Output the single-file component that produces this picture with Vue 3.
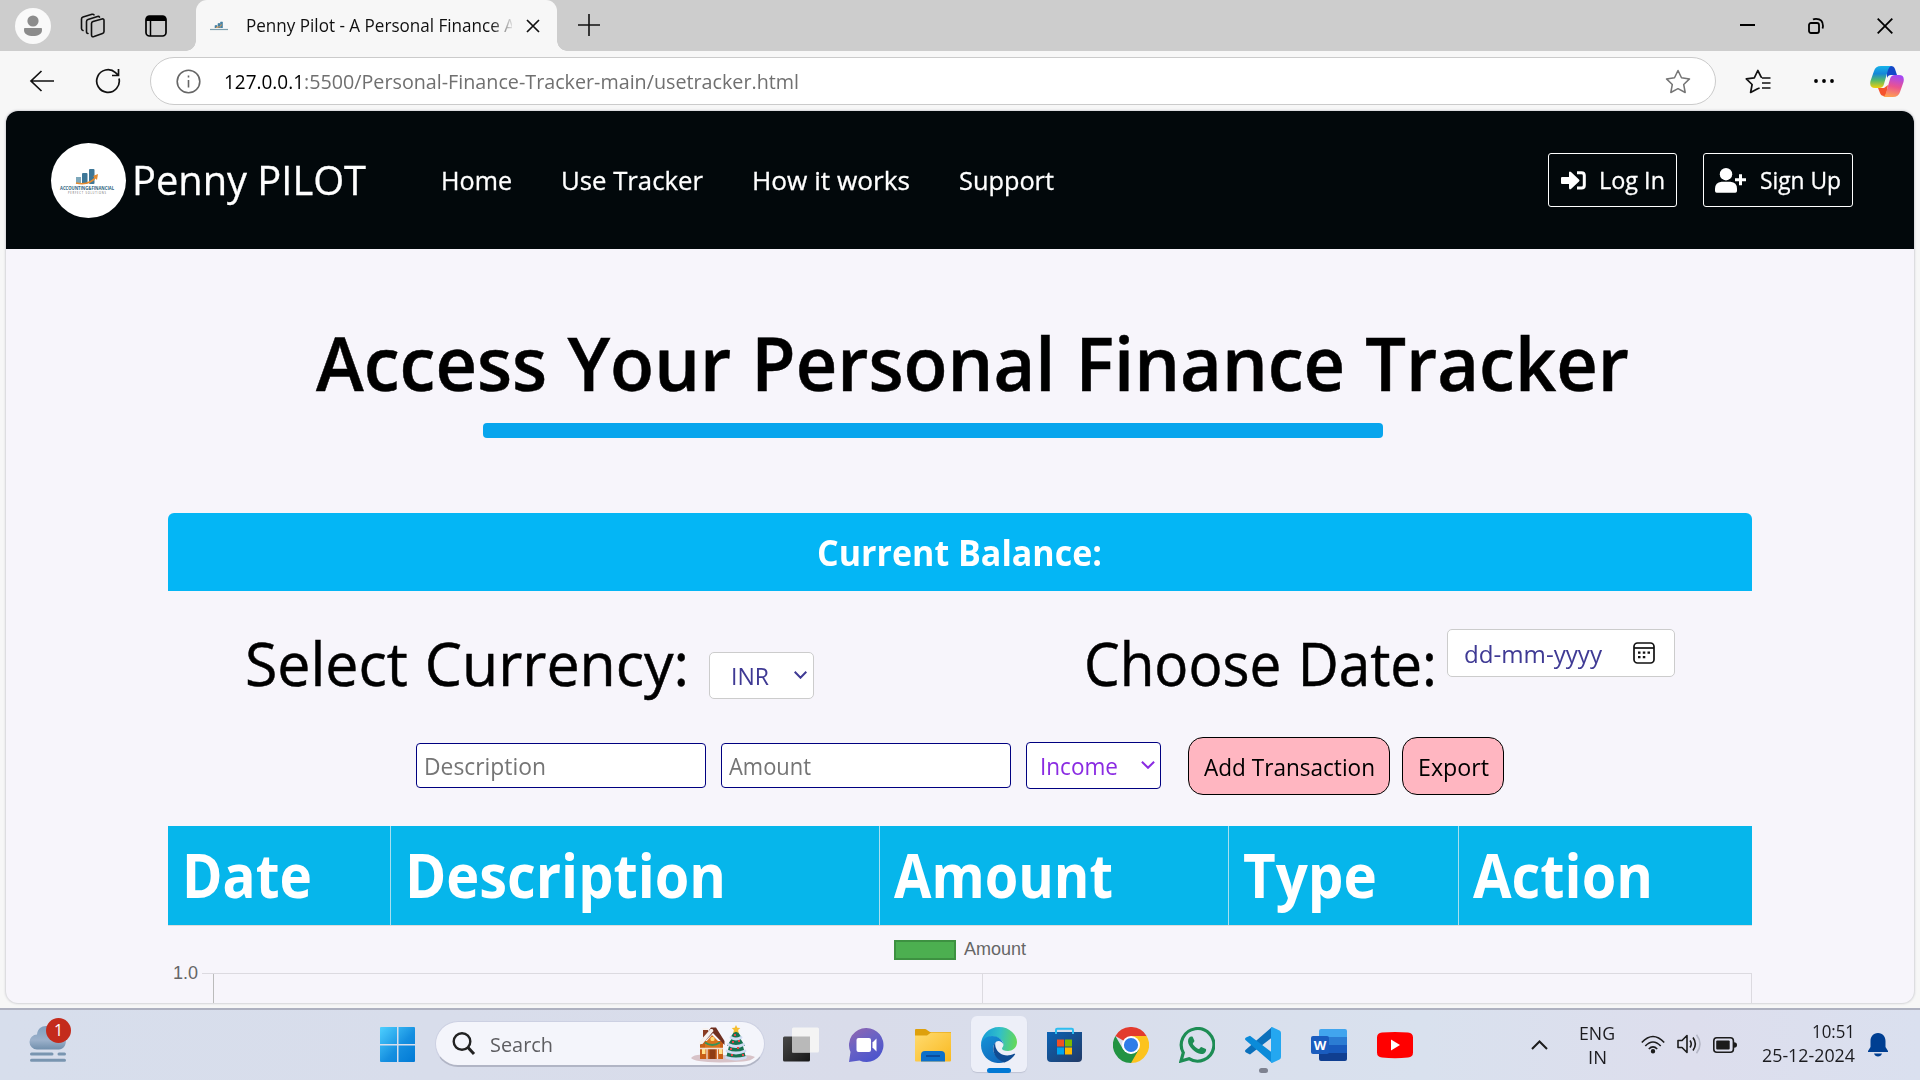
<script setup>
const vFit = {
  mounted(el, binding) {
    const natural = el.getBoundingClientRect().width
    el.style.transform = `scaleX(${binding.value / natural})`
    el.style.marginRight = binding.value - natural + 'px'
  },
}

const links = [
  { label: 'Home', width: 71 },
  { label: 'Use Tracker', width: 142 },
  { label: 'How it works', width: 158 },
  { label: 'Support', width: 95 },
]

const columns = [
  { label: 'Date', width: 130 },
  { label: 'Description', width: 321 },
  { label: 'Amount', width: 219 },
  { label: 'Type', width: 134 },
  { label: 'Action', width: 180 },
]
</script>

<template>
  <div class="desktop">
    <div class="tabbar">
      <svg class="avatar" width="36" height="36" viewBox="0 0 36 36">
        <circle cx="18" cy="18" r="18" fill="#f9f9f9" />
        <circle cx="18" cy="13" r="5.6" fill="#8c8c8c" />
        <path d="M9.5 20h17q.5 0 .5 2c0 4-4 6-9 6s-9-2-9-6q0-2 .5-2z" fill="#8c8c8c" />
      </svg>
      <svg class="collections" width="26" height="26" viewBox="0 0 26 26" fill="none" stroke="#111" stroke-width="1.6" stroke-linejoin="round" stroke-linecap="round">
        <path d="M11.5 10.5q0-1.500 1.500-2L22 6q2-.5 2 1.500v11q0 1.500-1.500 2L14 23.500q-2.500.8-2.500-1.500z" />
        <path d="M8 20.500q-1.500 0-1.500-2V8.500q0-1.500 1.500-2L17.500 3.500q1.500-.3 2 .6" />
        <path d="M3 17.500q-1.500-.3-1.500-2V6q0-1.500 1.500-2L12 1.300q1.500-.3 2 .6" />
      </svg>
      <svg class="tabmenu" width="22" height="22" viewBox="0 0 22 22">
        <rect x="1" y="1" width="20" height="20" rx="3.500" fill="none" stroke="#000" stroke-width="1.700" />
        <path d="M1 6V4q0-3 3-3h14q3 0 3 3v2z" fill="#000" />
        <path d="M5.500 6v15" stroke="#000" stroke-width="1.500" />
      </svg>
      <div class="tab">
        <svg width="18" height="10" viewBox="0 0 18 10">
          <path d="M5 7V4.500h2V7M8 7V2.500h2V7M10.500 7V1h2v6" fill="#4682a3" stroke="#4682a3" stroke-width=".6" />
          <path d="M6 6.500q4 0 6-3" stroke="#e69a4c" fill="none" />
          <path d="M0 8.500h18" stroke="#7d9fae" stroke-width="1.200" />
        </svg>
        <div class="tabtitle"><span v-fit="269">Penny Pilot - A Personal Finance A</span></div>
        <svg class="tabclose" width="14" height="14" viewBox="0 0 14 14" stroke="#111" stroke-width="1.700"><path d="M1 1l12 12M13 1L1 13" /></svg>
      </div>
      <svg class="plus" width="22" height="22" viewBox="0 0 22 22" stroke="#111" stroke-width="1.600"><path d="M11 0v22M0 11h22" /></svg>
      <div class="wincontrols">
        <svg width="15" height="15" viewBox="0 0 15 15" stroke="#000" stroke-width="2"><path d="M0 7h15" /></svg>
        <svg width="16" height="16" viewBox="0 0 16 16" fill="none" stroke="#000" stroke-width="1.800"><rect x="1" y="5" width="10" height="10" rx="2" /><path d="M5 1.500q1-.6 3-.6 7 0 7 7 0 1.500-.6 2.600" /></svg>
        <svg width="16" height="16" viewBox="0 0 16 16" stroke="#000" stroke-width="1.800"><path d="M.7.700l14.600 14.600M15.300.700L.7 15.300" /></svg>
      </div>
    </div>

    <div class="toolbar">
      <svg class="back" width="26" height="22" viewBox="0 0 26 22" fill="none" stroke="#111" stroke-width="1.700"><path d="M12.500 1L2 11l10.500 10M2 11h23" /></svg>
      <svg class="reload" width="26" height="26" viewBox="0 0 26 26" fill="none" stroke="#111" stroke-width="1.700"><path d="M24 10.500A11.300 11.300 0 1 1 20.500 4.600L23 7M23.500 1v6.500H17" /></svg>
      <div class="omnibox">
        <svg width="25" height="25" viewBox="0 0 25 25" fill="none" stroke="#666" stroke-width="1.600"><circle cx="12.500" cy="12.500" r="11.300" /><path d="M12.500 11v7.500M12.500 6.500v2" /></svg>
        <div class="url"><span v-fit="80" class="host">127.0.0.1</span><span v-fit="495">:5500/Personal-Finance-Tracker-main/usetracker.html</span></div>
        <svg class="star" width="26" height="25" viewBox="0 0 26 25" fill="none" stroke="#757575" stroke-width="1.500" stroke-linejoin="round"><path d="M13 1.500l3.500 7.300 8 1.100-5.800 5.600 1.500 8L13 19.700l-7.200 3.800 1.500-8L1.500 9.900l8-1.100z" /></svg>
      </div>
      <svg class="favs" width="26" height="25" viewBox="0 0 26 25" fill="none" stroke="#111" stroke-width="1.700" stroke-linejoin="round"><path d="M17 8.300l-.8-.1L12.800 1.500 9.300 8.800l-8 1.100 5.800 5.600-1.500 8 7-3.800 2-.7M17 9h8.500M17 14h8.500M17 19h8.500" /></svg>
      <svg class="dots" width="20" height="6" viewBox="0 0 20 6"><circle cx="2" cy="3" r="1.900" /><circle cx="10" cy="3" r="1.900" /><circle cx="18" cy="3" r="1.900" /></svg>
      <svg class="copilot" width="34" height="31" viewBox="0 0 34 31">
        <defs>
          <linearGradient id="cpA" x1="0" y1="0" x2="0" y2="1"><stop offset="0" stop-color="#17b4ea" /><stop offset=".35" stop-color="#1587d8" /><stop offset=".65" stop-color="#55b96b" /><stop offset="1" stop-color="#f4cf0a" /></linearGradient>
          <linearGradient id="cpB" x1=".5" y1="0" x2=".3" y2="1"><stop offset="0" stop-color="#a548f5" /><stop offset=".5" stop-color="#ea5390" /><stop offset="1" stop-color="#ffa24f" /></linearGradient>
        </defs>
        <path d="M17 0h4q3 0 4 3l2 6h-6q-3 0-4 3z" fill="#1448c8" />
        <path d="M8 22h6l4-3-2 11h-2q-3 0-4-3z" fill="#f5532d" />
        <path d="M11 0h10q-2 1-3 4l-4 14q-1 4-5 4H5q-6 0-4.500-7L4 5q1.500-5 7-5z" fill="url(#cpA)" />
        <path d="M23 31H13q2-1 3-4l4-14q1-4 5-4h4q6 0 4.500 7L30 26q-1.500 5-7 5z" fill="url(#cpB)" />
      </svg>
    </div>

    <main class="page">
      <header class="nav">
        <svg class="logo" width="75" height="75" viewBox="0 0 75 75">
          <circle cx="37.500" cy="37.500" r="37.500" fill="#fff" />
          <rect x="25" y="34" width="5" height="7" fill="#7ea8bb" />
          <rect x="31" y="30" width="5.500" height="11" rx="1" fill="#3e7797" />
          <rect x="38" y="26" width="5.500" height="15" rx="1" fill="#3e7797" />
          <path d="M25 40q13 3 20-6" fill="none" stroke="#e78b2f" stroke-width="1.600" />
          <path d="M47 31l-5 2 4 4z" fill="#e78b2f" />
          <text x="9" y="46.500" textLength="54" lengthAdjust="spacingAndGlyphs" font-size="4.600" font-weight="700" fill="#2d627e">ACCOUNTING&amp;FINANCIAL</text>
          <text x="17" y="50.500" textLength="38" font-size="2.600" fill="#666">PERFECT SOLUTIONS</text>
        </svg>
        <div class="brand"><span v-fit="234">Penny PILOT</span></div>
        <nav class="links"><a v-for="l in links" :key="l.label"><span v-fit="l.width">{{ l.label }}</span></a></nav>
        <div class="auth">
          <a class="login">
            <svg width="25" height="19" viewBox="0 0 25 19"><path d="M1 6h7V1.500Q8.500-.3 10 .9l8 7.500q.9 1 0 2l-8 7.600q-1.500 1.200-2-.7V13H1q-1 0-1-1V7q0-1 1-1z" fill="#fff" /><path d="M16 1.700h4.500q2.800 0 2.800 2.800v9.800q0 2.800-2.800 2.800H16" fill="none" stroke="#fff" stroke-width="3" /></svg>
            <span v-fit="66">Log In</span>
          </a>
          <a class="signup">
            <svg width="31" height="25" viewBox="0 0 31 25" fill="#fff"><circle cx="11" cy="6.200" r="6.200" /><path d="M6.500 13.800h9q6.500.5 6.500 7V23q0 1.700-1.700 1.700H1.700Q0 24.700 0 23v-2.200q.2-6.500 6.500-7zM24 6.200h3v4h4v3h-4v4h-3v-4h-4v-3h4z" /></svg>
            <span v-fit="81">Sign Up</span>
          </a>
        </div>
      </header>

      <h1><span v-fit="1313">Access Your Personal Finance Tracker</span></h1>
      <div class="rule"></div>

      <section class="tracker">
        <div class="balance"><span v-fit="285">Current Balance:</span></div>
        <div class="pickers">
          <label class="big currency"><span v-fit="444">Select Currency:</span></label>
          <div class="field inr"><span v-fit="38">INR</span><svg width="13" height="8" viewBox="0 0 13 8" fill="none" stroke="#3f3a94" stroke-width="2"><path d="M.7.700l5.800 6 5.800-6" /></svg></div>
          <label class="big date"><span v-fit="353">Choose Date:</span></label>
          <div class="field datebox">
            <span v-fit="138">dd-mm-yyyy</span>
            <svg width="22" height="22" viewBox="0 0 22 22"><rect x="1" y="1" width="20" height="20" rx="3.500" fill="none" stroke="#111" stroke-width="1.700" /><path d="M1 6h20" stroke="#111" stroke-width="1.700" /><path d="M5 10.700h2.500M9.800 10.700h2.500M14.500 10.700H17M5 15.200h2.500M9.800 15.200h2.500" stroke="#111" stroke-width="2.300" /></svg>
          </div>
        </div>
        <div class="form">
          <div class="input"><span v-fit="122">Description</span></div>
          <div class="input"><span v-fit="82">Amount</span></div>
          <div class="kind"><span v-fit="78">Income</span><svg width="14" height="8" viewBox="0 0 14 8" fill="none" stroke="#8a2be2" stroke-width="2"><path d="M.9.700L7 6.800 13.100.700" /></svg></div>
          <button class="add"><span v-fit="171">Add Transaction</span></button>
          <button class="export"><span v-fit="71">Export</span></button>
        </div>
        <div class="thead"><div v-for="c in columns" :key="c.label"><span v-fit="c.width">{{ c.label }}</span></div></div>
        <div class="chart">
          <div class="legend"><i></i><span>Amount</span></div>
          <div class="plot">
            <span class="tick">1.0</span>
            <div class="grid"><div class="stub"></div><div class="cell"></div><div class="cell"></div></div>
          </div>
        </div>
      </section>
    </main>

    <footer class="taskbar">
      <div class="weather">
        <svg width="44" height="48" viewBox="0 0 44 48">
          <defs><linearGradient id="cl" x1="0" y1="0" x2="0" y2="1"><stop offset="0" stop-color="#7f9fbe" /><stop offset=".6" stop-color="#9cb1cb" /><stop offset="1" stop-color="#718fac" /></linearGradient></defs>
          <path d="M9 29.500a7.500 7.500 0 0 1 0-15C10 3.500 24 3.500 27 12.500c6-2 11 3 11 7.500 0 6-3 9.500-7 9.500z" fill="url(#cl)" />
          <path d="M3.500 34h20.500M31 34h5.500M3.500 40.200h33" stroke="#7995b0" stroke-width="3" stroke-linecap="round" />
        </svg>
        <b>1</b>
      </div>
      <svg class="windows" width="36" height="36" viewBox="0 0 36 36">
        <defs><linearGradient id="wn" x1="0" y1="0" x2="36" y2="36" gradientUnits="userSpaceOnUse"><stop offset="0" stop-color="#4ed0ff" /><stop offset=".55" stop-color="#158fe0" /><stop offset="1" stop-color="#0078d4" /></linearGradient></defs>
        <path d="M1 0h16v17H0V1q0-1 1-1zM18.500 0H34q1 0 1 1v16H18.500zM0 18.500h17V35H1q-1 0-1-1zM18.500 18.500H35V34q0 1-1 1H18.500z" fill="url(#wn)" />
      </svg>
      <div class="search">
        <svg width="24" height="24" viewBox="0 0 24 24" fill="none" stroke="#222" stroke-width="2.400"><circle cx="10" cy="9.500" r="8.300" /><path d="M16 15.500l6 6.500" stroke-width="3" /></svg>
        <span v-fit="63">Search</span>
        <svg class="holiday" width="64" height="38" viewBox="0 0 64 38">
          <path d="M0 33q4-4 12-3h40q9 0 12 2-4 4-12 4.500-30 2-44-.5-6-1-8-3z" fill="#d8c3c8" />
          <path d="M12 4h5v9h-5z" fill="#8a3b22" /><path d="M9 16h23v18H9z" fill="#c95f16" />
          <path d="M20 2.500h5L33.500 16v4L22 8 9.500 20.500v-4z" fill="#6f2f20" /><path d="M19.500 4l2 0 1 2-11 13-3 .5v-3zM11.500 3h6v2h-6z" fill="#f7f1ef" />
          <path d="M21 10l8 8v6H14v-6z" fill="#d9731c" />
          <path d="M14 17.500q7 5 15 0" fill="none" stroke="#35945a" stroke-width="1.800" />
          <rect x="18.500" y="24" width="6" height="10" fill="#8f3d14" /><rect x="11" y="24" width="3.500" height="5" fill="#ffe08a" /><rect x="28" y="24" width="3.500" height="5" fill="#ffe08a" /><rect x="19.500" y="12" width="4" height="4" rx="1.500" fill="#ffd977" />
          <path d="M16 23v11M26.500 23v11M9 23.500h23" stroke="#f5ddd0" stroke-width="1.300" />
          <path d="M45 4l6 9h-2l5 8h-2l3 12H35l3-12h-2l5-8h-2z" fill="#17724f" />
          <path d="M40 12.500q5 3 10 0M37.500 19.500q7.500 4 15 0M36 26q9 4 18 0M35.500 32.500q9.500 3 19 0" fill="none" stroke="#cfdcf2" stroke-width="2.800" stroke-linecap="round" />
          <path d="M45 0l1.300 2.700 3 .4-2.200 2 .6 3L45 6.700l-2.700 1.400.6-3-2.200-2 3-.4z" fill="#f5bd2d" />
          <path d="M43 10h2M47 16h2M41 17h2M39 24h2M46 23h2M51 30h2M40 30h2" stroke="#e54545" stroke-width="2" />
        </svg>
      </div>
      <div class="apps">
        <svg width="36" height="36" viewBox="0 0 36 36">
          <defs><linearGradient id="tk" x1="0" y1="0" x2="1" y2="1"><stop offset="0" stop-color="#484848" /><stop offset="1" stop-color="#171717" /></linearGradient></defs>
          <rect x="0" y="9.500" width="27" height="25" rx="1.500" fill="url(#tk)" /><rect x="9" y=".5" width="27" height="25" rx="1.500" fill="#f4f4f4" /><path d="M9 9.500h18v16H9z" fill="#b9b9b9" />
        </svg>
        <svg width="36" height="36" viewBox="0 0 36 36">
          <defs><linearGradient id="ct" x1="0" y1="0" x2=".6" y2="1"><stop offset="0" stop-color="#9566ae" /><stop offset=".5" stop-color="#6a62c4" /><stop offset="1" stop-color="#4d55cc" /></linearGradient></defs>
          <path d="M17.500 1a17 17 0 1 1-7 32.500L0 35l1.500-10A17 17 0 0 1 17.500 1z" fill="url(#ct)" /><rect x="7.500" y="11" width="14.500" height="14" rx="2" fill="#fff" /><path d="M23.500 15.500l4-4v13l-4-4z" fill="#fff" />
        </svg>
        <svg width="36" height="36" viewBox="0 0 36 36">
          <defs><linearGradient id="fd" x1="0" y1="0" x2="1" y2="1"><stop offset="0" stop-color="#ffdb70" /><stop offset="1" stop-color="#f9b920" /></linearGradient></defs>
          <path d="M0 3q0-1 1-1h9q1 0 2 1l3 2H36v4H0z" fill="#dea00c" /><path d="M0 8.500h12l4-3h20v28q0 1-1 1H1q-1 0-1-1z" fill="url(#fd)" /><path d="M6 34.500V28q0-4 4-4h16q4 0 4 4v6.500z" fill="#0c70ca" /><path d="M11 29h14" stroke="#0a4c9c" stroke-width="2" />
        </svg>
        <div class="active">
          <svg width="36" height="36" viewBox="0 0 36 36">
            <defs>
              <linearGradient id="e1" x1="0" y1=".4" x2="1" y2=".5"><stop offset="0" stop-color="#149ad8" /><stop offset=".5" stop-color="#31bfc9" /><stop offset="1" stop-color="#64d957" /></linearGradient>
              <linearGradient id="e2" x1="0" y1="0" x2=".6" y2="1"><stop offset="0" stop-color="#1592d7" /><stop offset="1" stop-color="#126bbd" /></linearGradient>
            </defs>
            <path d="M0 18C0 8 8 0 18 0c11 0 18 8 18 15 0 6-5 9-9 9-4 0-6-1-6-2.500 0-1 1.500-1.500 1.500-4 0-4-5-8-11-8C6 9.500 2 14 0 18z" fill="url(#e1)" />
            <path d="M0 18c1-6 6-9 11-9 7 0 11.500 5 11.500 9-1-3-3-4-5-4-4 0-8 8-3 14 3 4 6 6 9 7-11 4-23.500-4-23.500-17z" fill="url(#e2)" />
            <path d="M14.500 15c-5.500 8 0 18 9 20.500 5-1.500 8.500-5 10.500-8 .5-1-.3-1-1-.7-5 2.500-11 2-14.500-1-3.500-3-5-7-4-10.800z" fill="#104c93" />
          </svg>
          <i></i>
        </div>
        <svg width="36" height="36" viewBox="0 0 36 36">
          <defs><linearGradient id="st" x1="0" y1="0" x2="1" y2="1"><stop offset="0" stop-color="#0b63b5" /><stop offset="1" stop-color="#223a66" /></linearGradient></defs>
          <path d="M0 5h35v26q0 4-4 4H4q-4 0-4-4z" fill="url(#st)" /><path d="M9 7V3q0-1.200 1.200-1.200h14.600Q26 1.800 26 3v4" fill="none" stroke="#2dbdf0" stroke-width="2" /><path d="M10 12.500h7v7h-7z" fill="#f25022" /><path d="M18 12.500h7v7h-7z" fill="#7fba00" /><path d="M10 20.500h7v7h-7z" fill="#00a4ef" /><path d="M18 20.500h7v7h-7z" fill="#ffb900" />
        </svg>
        <svg width="36" height="36" viewBox="0 0 36 36">
          <path d="M18 18L2.400 9A18 18 0 0 1 33.600 9z" fill="#e33b2e" /><path d="M18 18V9h15.600A18 18 0 0 1 18 36z" fill="#fcc31e" /><path d="M2.400 9L10.200 22.500 18 27l7.800-4.500L18 36A18 18 0 0 1 2.400 9z" fill="#229342" /><circle cx="18" cy="18" r="9" fill="#fff" /><circle cx="18" cy="18" r="7.100" fill="#2f7de9" />
        </svg>
        <svg width="36" height="36" viewBox="0 0 36 36">
          <path d="M2 34l2.300-8.300A16.300 16.300 0 1 1 10 31.700z" fill="none" stroke="#1d8d54" stroke-width="3.200" /><path d="M12.500 9.500c1 0 1.300.5 1.600 1.300l1.300 3c.3.800-1.600 2.200-1.600 3 0 .9 4.200 5.200 6 5.200.8 0 1.800-2.100 2.500-2l4 1.800c.8.400.9.700.8 1.600-.3 2.500-3 3.800-5 3.600C16 26.500 9 19 9 14.300c0-2.800 1.700-4.800 3.500-4.800z" fill="#1d8d54" />
        </svg>
        <div class="running">
          <svg width="36" height="36" viewBox="0 0 36 36">
            <path d="M27 0v10.500L5 27.500 1 25.500q-2-1.500 0-3z" fill="#0b70bb" /><path d="M27 36V25.500L5 8.700 1 10.500q-2 1.500 0 3z" fill="#0b8bd9" /><path d="M27 0l7.500 3.500Q36 4.300 36 6v24q0 1.700-1.500 2.500L27 36q-1-.2-1-1.500v-33Q26 .2 27 0z" fill="#24a7f0" />
          </svg>
          <i></i>
        </div>
        <svg width="36" height="36" viewBox="0 0 36 36">
          <path d="M8 10V4q0-2 2-2h24q2 0 2 2v6z" fill="#41a5ee" /><path d="M8 10h28v8H8z" fill="#2b7cd3" /><path d="M8 18h28v8H8z" fill="#185abd" /><path d="M8 26h28v6q0 2-2 2H10q-2 0-2-2z" fill="#103f91" /><rect y="9" width="18" height="18" rx="2" fill="#1a5cbe" /><text x="9" y="22.500" text-anchor="middle" font-size="13" font-weight="700" fill="#fff">W</text>
        </svg>
        <svg width="36" height="36" viewBox="0 0 36 36"><path d="M5 5.600q13-1.200 26 0 5 .4 5 5v15q0 4.500-5 5-13 1.200-26 0-5-.5-5-5v-15q0-4.600 5-5z" fill="#f00" /><path d="M14 12.500l9 5.500-9 5.500z" fill="#fff" /></svg>
      </div>
      <div class="tray">
        <svg class="up" width="17" height="10" viewBox="0 0 17 10" fill="none" stroke="#1c1c1c" stroke-width="2"><path d="M1 9l7.500-7.500L16 9" /></svg>
        <div class="lang"><span v-fit="36">ENG</span><span v-fit="19">IN</span></div>
        <svg class="wifi" width="24" height="19" viewBox="0 0 24 19" fill="none" stroke="#1c1c1c" stroke-width="1.600"><path d="M.8 7.500q11.200-12 22.400 0M4.300 11q7.700-8 15.400 0M7.800 14q4.200-4.200 8.400 0" /><circle cx="12" cy="16.300" r="1.400" fill="#1c1c1c" /></svg>
        <svg class="sound" width="25" height="20" viewBox="0 0 25 20" fill="none" stroke="#1c1c1c" stroke-width="1.600"><path d="M1 6.500h4l5-5v17l-5-5H1z" stroke-linejoin="round" /><path d="M13 6.500q2.500 3.500 0 7M16 3.500q4.700 6.500 0 13" /><path d="M19.500.800q7 9.200 0 18.400" stroke="#b4b7c6" /></svg>
        <svg class="battery" width="24" height="16" viewBox="0 0 24 16"><rect x=".8" y=".8" width="19.600" height="14.400" rx="3" fill="none" stroke="#1c1c1c" stroke-width="1.600" /><rect x="3.200" y="3.500" width="13.500" height="9" rx="1" fill="#1c1c1c" /><path d="M21 5.300q3 0 3 2.700t-3 2.700z" fill="#1c1c1c" /></svg>
        <div class="clock"><span v-fit="43">10:51</span><span v-fit="93">25-12-2024</span></div>
        <svg class="bell" width="20" height="24" viewBox="0 0 20 24" fill="#003f92"><path d="M10 0c5 0 7.500 4 7.500 8v6l2.500 4v1H0v-1l2.500-4V8c0-4 2.500-8 7.500-8zM6 20.500h8q-1 3-4 3t-4-3z" /></svg>
      </div>
    </footer>
  </div>
</template>

<style>
html, body { margin: 0; overflow: hidden; }
</style>

<style scoped>
* { box-sizing: border-box; }
.desktop { width: 1920px; height: 1080px; background: #f7f7f7; font-family: "Open Sans", "Noto Sans", sans-serif; display: flex; flex-direction: column; overflow: hidden; }
svg { display: block; flex: none; }
span { display: inline-block; flex: none; white-space: nowrap; transform-origin: 0 50%; }

.tabbar { height: 51px; background: #cdcdcd; display: flex; align-items: center; flex: none; }
.avatar { margin-left: 15px; }
.collections { margin-left: 29px; }
.tabmenu { margin-left: 39px; }
.tab { position: relative; margin-left: 29px; width: 361px; height: 51px; background: #f7f7f7; border-radius: 11px 11px 0 0; display: flex; align-items: center; padding-left: 14px; }
.tab::before, .tab::after { content: ""; position: absolute; bottom: 0; width: 10px; height: 10px; }
.tab::before { left: -10px; background: radial-gradient(circle at 0 0, #cdcdcd 9.500px, #f7f7f7 10px); }
.tab::after { right: -10px; background: radial-gradient(circle at 100% 0, #cdcdcd 9.500px, #f7f7f7 10px); }
.tabtitle { margin: -1px 0 0 18px; width: 266px; overflow: hidden; font-size: 17.500px; color: #111; white-space: nowrap; -webkit-mask-image: linear-gradient(90deg, #000 92%, transparent 101%); mask-image: linear-gradient(90deg, #000 92%, transparent 101%); }
.tabclose { margin-left: 14px; }
.plus { margin: -1px 0 0 21px; }
.wincontrols { margin-left: auto; margin-right: 27px; display: flex; align-items: center; gap: 53px; }

.toolbar { height: 60px; flex: none; display: flex; align-items: center; }
.back { margin-left: 29px; }
.reload { margin-left: 40px; }
.omnibox { margin-left: 29px; width: 1566px; height: 48px; border: 1.500px solid #cbcbcb; border-radius: 24px; background: #fff; display: flex; align-items: center; padding: 0 24px 0 25px; }
.url { margin: 1px 0 0 23px; font-size: 20px; color: #707070; white-space: nowrap; line-height: 46px; }
.host { color: #000; }
.star { margin-left: auto; }
.favs { margin-left: 29px; }
.dots { margin-left: 43px; }
.copilot { margin-left: 36px; }

.page { margin: 0 6px; height: 892px; flex: none; border-radius: 12px; overflow: hidden; background: #f7f5fb; box-shadow: 0 0 2px 1px #d4d4d8; color: #000; }
.nav { height: 138px; background: #02080b; color: #fff; display: flex; align-items: center; font-weight: 500; -webkit-text-stroke: .3px #fff; }
.logo { margin-left: 45px; overflow: visible; -webkit-text-stroke: 0; }
.brand { margin: -2px 0 0 6px; font-size: 41px; width: 235px; }
.links { margin-left: 74px; display: flex; gap: 49px; font-size: 26px; }
.auth { margin-left: auto; margin-right: 61px; display: flex; gap: 26px; font-size: 24px; }
.auth a { height: 54px; border: 1.500px solid #fff; border-radius: 3px; display: flex; align-items: center; }
.login { width: 129px; padding-left: 12px; }
.auth span { margin-top: -1px; }
.login span { margin-left: 13px; }
.signup { width: 150px; padding-left: 11px; }
.signup span { margin-left: 14px; }

h1 { margin: 60px 0 0 310px; font-size: 75px; line-height: 107px; font-weight: 600; word-spacing: .02em; -webkit-text-stroke: .5px #000; }
.rule { margin: 7px 0 0 477px; width: 900px; height: 15px; border-radius: 4px; background: #08a5ed; }
.tracker { margin: 75px 162px 0; width: 1584px; }
.balance { height: 78px; border-radius: 6px 6px 0 0; background: #04b6f5; color: #fff; font-size: 35px; font-weight: 700; display: flex; align-items: center; padding-left: 649px; }
.pickers { height: 146px; display: flex; align-items: flex-start; }
.big { font-size: 60px; line-height: 80px; margin-top: 32px; word-spacing: .03em; -webkit-text-stroke: .5px #000; }
.currency { margin-left: 77px; width: 444px; }
.date { margin-left: 270px; width: 355px; }
.field { background: #fff; border: 1.500px solid #ccc; border-radius: 5px; color: #3f3a94; font-size: 24px; display: flex; align-items: center; }
.inr { margin: 61px 0 0 20px; width: 105px; height: 47px; padding-left: 21px; }
.inr svg { margin: -2px 0 0 auto; margin-right: 6px; }
.datebox { margin: 38px 0 0 8px; width: 228px; height: 48px; padding: 0 19px 0 16px; }
.datebox svg { margin: -1px 0 0 auto; }
.form { height: 58px; display: flex; align-items: center; padding-left: 248px; font-size: 24px; }
.input { width: 290px; height: 45px; margin: 0 15px 1px 0; padding-left: 7px; border: 1.500px solid #000080; border-radius: 4px; background: #fff; color: #757575; display: flex; align-items: center; }
.kind { width: 135px; height: 47px; margin-bottom: 1px; border: 1.500px solid #000080; border-radius: 4px; background: #fff; color: #8a2be2; display: flex; align-items: center; padding: 0 5px 0 13px; }
.kind svg { margin: -2px 0 0 auto; }
button { display: flex; align-items: center; height: 58px; padding: 0; border: 1.500px solid #000; border-radius: 15px; background: #ffb6c1; color: #000; font: inherit; }
.add { width: 202px; margin-left: 27px; padding-left: 15px; }
.export { width: 102px; margin-left: 12px; padding-left: 15px; }
.thead { margin-top: 31px; height: 99px; display: grid; grid-template-columns: 223px 489px 349px 230px 293px; background: #06b6eb; color: #fff; font-size: 60px; line-height: 98px; font-weight: 700; }
.thead div { padding-left: 14px; border-right: 1px solid #a7dff0; }
.thead div:last-child { border-right: 0; }
.chart { border-top: 1px solid #ddd; font-family: "Liberation Sans", Arial, sans-serif; font-size: 18px; line-height: 20px; color: #666; }
.legend { display: flex; padding: 14px 0 0 726px; }
.legend i { width: 62px; height: 20px; background: #4caf50; border: 2px solid #3d9141; }
.legend span { margin: -1px 0 0 8px; }
.plot { display: flex; margin-top: 2px; }
.tick { width: 34px; padding-left: 5px; padding-top: 1px; }
.grid { margin-top: 11px; flex: 1; height: 40px; border-top: 1.500px solid #dcdae0; display: flex; }
.stub { width: 12px; border-right: 1.500px solid #bbb; }
.cell { flex: 1; border-right: 1.500px solid #dcdae0; }

.taskbar { margin-top: 5px; height: 72px; flex: none; border-top: 2px solid #aeb1c0; background: linear-gradient(90deg, #d7deec, #d9dcea 45%, #d9e1ee 74%, #dddeed 88%, #dae0ef); display: flex; align-items: center; }
.weather { position: relative; width: 44px; margin-left: 28px; margin-top: -2px; }
.weather b { position: absolute; left: 18px; top: -2px; width: 25px; height: 25px; border-radius: 50%; background: #c42b1c; color: #fff; font-size: 16px; font-weight: 400; line-height: 24px; text-align: center; }
.windows { margin-left: 308px; }
.search { margin-left: 19px; margin-top: -2px; width: 330px; height: 46px; border: 1.500px solid #ccd0e2; border-bottom: 2px solid #b1b5c5; border-radius: 23px; background: #f4f5fb; display: flex; align-items: center; padding: 0 9px 0 16px; font-size: 20px; color: #5d5d61; }
.search span { margin: 1px 0 0 14px; }
.holiday { margin-left: auto; }
.apps { display: flex; margin-left: 18px; gap: 30px; align-items: center; }
.active { position: relative; width: 56px; height: 56px; margin: -2px -10px 0; padding: 11px 10px 9px; border-radius: 6px; background: #edeff8; box-shadow: 0 1px 1px #bfc3d4; }
.active i, .running i { position: absolute; border-radius: 3px; }
.active i { left: 16px; bottom: -1px; width: 24px; height: 5px; background: #0078d4; }
.running { position: relative; }
.running i { left: 14px; top: 41px; width: 9px; height: 5px; background: #7e8290; }
.tray { margin-left: 118px; display: flex; align-items: center; font-size: 18px; line-height: 24px; color: #1b1b1f; }
.lang { margin-left: 31px; width: 36px; display: flex; flex-direction: column; align-items: center; }
.wifi { margin: -2px 0 0 26px; }
.sound { margin: -2px 0 0 12px; }
.battery { margin: -1px 0 0 11px; }
.clock { margin-left: 25px; width: 93px; margin-top: -4px; display: flex; flex-direction: column; align-items: flex-end; }
.bell { margin-left: 13px; }
</style>
